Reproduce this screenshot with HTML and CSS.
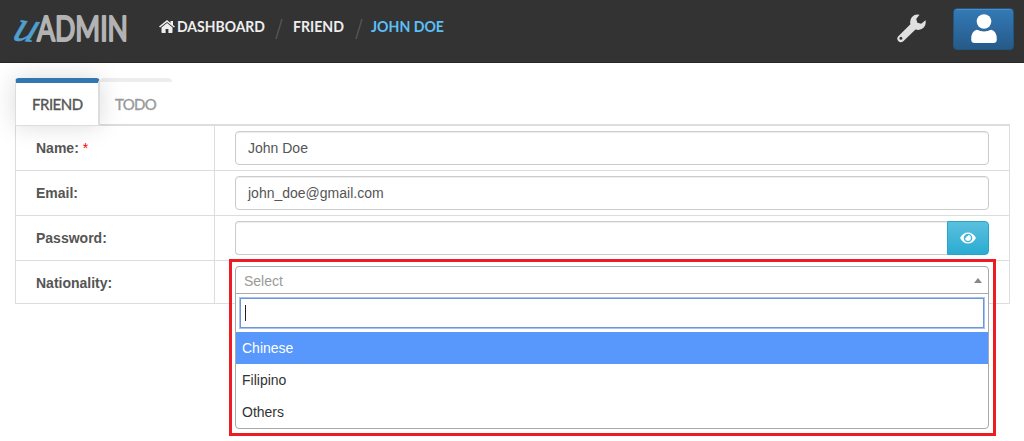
FILE: index.html
```html
<!DOCTYPE html>
<html lang="en">
<head>
<meta charset="utf-8">
<title>uAdmin - John Doe</title>
<link rel="stylesheet" href="styles.css">
</head>
<body>
<header class="navbar">
  <svg class="logo" width="118" height="34" viewBox="0 0 118 34" role="img" aria-label="uAdmin">
    <text class="logo-u" transform="translate(-1 27) rotate(5) skewX(-16)" x="0" y="0" textLength="23" lengthAdjust="spacingAndGlyphs">u</text>
    <text class="logo-admin" x="25" y="28" textLength="91" lengthAdjust="spacingAndGlyphs">ADMIN</text>
  </svg>
  <nav class="breadcrumb">
    <a class="crumb crumb-home"><svg class="home" width="16" height="13" viewBox="0 0 16 13"><path d="M8 2.9 2.500 7.400V12.200Q2.500 13 3.300 13H6.600V9H9.400V13H12.700Q13.500 13 13.500 12.200V7.400Z"/><path d="M8 0 11.500 2.900V1H14V5L16 6.600 15 7.600 8 1.900 1 7.600 0 6.600Z"/></svg><svg width="89" height="20"><text x="0" y="15" textLength="88" lengthAdjust="spacingAndGlyphs">DASHBOARD</text></svg></a>
    <svg class="slash" width="10" height="24"><path d="M2 22 8 2"/></svg>
    <a class="crumb crumb-friend"><svg width="52" height="20"><text x="0" y="15" textLength="51" lengthAdjust="spacingAndGlyphs">FRIEND</text></svg></a>
    <svg class="slash" width="10" height="24"><path d="M2 22 8 2"/></svg>
    <a class="crumb crumb-active"><svg width="74" height="20"><text x="0" y="15" textLength="73" lengthAdjust="spacingAndGlyphs">JOHN DOE</text></svg></a>
  </nav>
  <div class="tools">
    <svg class="wrench" width="30" height="30" viewBox="0 0 30 30"><path fill-rule="evenodd" d="M22.500.8Q18-.2 15 3 12.400 6.100 13.400 10.200L1.300 22.300Q-.7 24.400 1.200 26.900 3.600 29.500 6.300 27.300L18.500 15.600Q23.500 17.200 27 13.300 29.400 10 28.500 6.300L24.200 9.700 20.400 8.800 19.200 4.900ZM3.900 22.800A1.500 1.500 0 1 1 3.900 25.800 1.500 1.500 0 1 1 3.900 22.800Z"/></svg>
    <button class="user" aria-label="User"><svg width="26" height="30" viewBox="0 0 26 30"><circle cx="13" cy="7.500" r="7.300"/><path d="M6 15.800Q13 19 20 15.800 25.800 16.800 25.800 25.500 25.800 29 22.300 29H3.700Q.2 29 .2 25.500 .2 16.800 6 15.800Z"/></svg></button>
  </div>
</header>
<main class="content">
  <div class="tabs">
    <div class="tab tab-active">FRIEND</div>
    <div class="tab tab-idle">TODO</div>
  </div>
  <div class="form">
    <div class="row"><label class="label">Name: <span class="required">*</span></label><div class="field"><div class="input">John Doe</div></div></div>
    <div class="row"><label class="label">Email:</label><div class="field"><div class="input">john_doe@gmail.com</div></div></div>
    <div class="row"><label class="label">Password:</label><div class="field"><div class="input input-password"></div><button class="reveal" aria-label="Show password"><svg width="16" height="12" viewBox="0 0 16 12"><path fill-rule="evenodd" d="M0 6Q3 .5 8 .5T16 6Q13 11.500 8 11.500T0 6ZM8 1.700A4.300 4.300 0 1 0 8 10.300 4.300 4.300 0 1 0 8 1.700ZM8 3.100A2.900 2.900 0 1 1 8 8.900 2.900 2.900 0 0 1 5.100 6H6Q6 4 8 4Z"/></svg></button></div></div>
    <div class="row row-last"><label class="label">Nationality:</label><div class="field">
      <div class="picker">
        <div class="picker-head"><span>Select</span><i class="arrow"></i></div>
        <div class="picker-list">
          <div class="search"><i class="caret"></i></div>
          <div class="option option-active">Chinese</div>
          <div class="option">Filipino</div>
          <div class="option">Others</div>
        </div>
      </div>
    </div></div>
  </div>
</main>
</body>
</html>
```
FILE: styles.css
```css
* { box-sizing: border-box; }
body {
  margin: 0;
  height: 441px;
  overflow: hidden;
  background: #fff;
  color: #555;
  font: 14px/20px "Liberation Sans", Arial, sans-serif;
}
svg { display: block; flex: none; }
button { padding: 0; margin: 0; }

.navbar {
  display: flex;
  height: 63px;
  padding: 0 10px 0 12px;
  background: #333;
  border-bottom: 1px solid #282828;
}
.logo { margin-top: 13px; overflow: visible; }
.logo-u {
  font: italic 44px "Liberation Serif", serif;
  fill: #4f9fcf;
  stroke: #4f9fcf;
  stroke-width: .5px;
}
.logo-admin {
  font: 34px Lato, sans-serif;
  fill: #b3b3b3;
  stroke: #b3b3b3;
  stroke-width: 2px;
  stroke-linejoin: round;
}
.breadcrumb { display: flex; align-items: flex-start; margin-left: 29px; padding-top: 17px; }
.crumb { display: flex; fill: #eee; font: bold 15px Lato, sans-serif; }
.crumb svg { overflow: visible; }
.crumb .home { margin: 3px 2px 0 0; }
.crumb-home { width: 115px; }
.crumb-friend { width: 61px; margin-left: 9px; }
.crumb-active { margin-left: 7px; fill: #5bc0f8; }
.slash { fill: none; stroke: #555; stroke-width: 1.4px; }
.tools { display: flex; margin-left: auto; }
.wrench { margin: 14px 26px 0 0; fill: #e0e0e0; }
.user {
  display: flex;
  justify-content: center;
  width: 61px;
  height: 42px;
  margin-top: 8px;
  padding-top: 5px;
  border: 1px solid #245580;
  border-radius: 4px;
  background: linear-gradient(#337ab7, #265a88);
  box-shadow: inset 0 1px 0 rgba(255, 255, 255, .15);
  fill: #fff;
}

.content { padding: 15px 14px 0 15px; }
.tabs {
  display: flex;
  height: 48px;
  border-bottom: 2px solid #ddd;
  font: 15px/20px Lato, sans-serif;
}
.tab { border-radius: 4px 4px 0 0; }
.tab-active {
  width: 85px;
  height: 48px;
  padding: 11px 0 0 16px;
  border: 1px solid #ddd;
  border-right-width: 2px;
  border-top: 5px solid #3276b1;
  background: #fff;
  box-shadow: 0 0 25px rgba(0, 0, 0, .15);
  letter-spacing: -.5px;
  -webkit-text-stroke: .35px #555;
}
.tab-idle {
  width: 72px;
  height: 46px;
  border-top: 4px solid rgba(0, 0, 0, .07);
  padding: 12px 0 0 15px;
  color: #999;
  letter-spacing: -.7px;
  -webkit-text-stroke: .35px #999;
}
.form { border: 1px solid #ddd; border-top: 0; }
.row { display: flex; height: 45px; border-bottom: 1px solid #ddd; }
.row-last { height: 42px; border-bottom: 0; }
.label {
  width: 199px;
  padding: 12px 0 0 20px;
  border-right: 1px solid #ddd;
  font-weight: bold;
}
.required { color: #f00; font-weight: normal; }
.field { display: flex; flex: 1; padding: 5px 20px 0; }
.input {
  flex: 1;
  height: 34px;
  padding: 6px 12px;
  border: 1px solid #ccc;
  border-radius: 4px;
  box-shadow: inset 0 1px 1px rgba(0, 0, 0, .075);
}
.input-password { border-right: 0; border-radius: 4px 0 0 4px; }
.reveal {
  display: flex;
  align-items: center;
  justify-content: center;
  width: 42px;
  height: 34px;
  border: 1px solid #28a4c9;
  border-radius: 0 4px 4px 0;
  background: linear-gradient(#5bc0de, #2aabd2);
  fill: #fff;
}
.picker {
  position: relative;
  flex: 1;
  height: 163px;
  border: 1px solid #aaa;
  border-radius: 4px;
  background: #fff;
}
/* Highlight frame drawn over the surrounding form */
.picker::after {
  content: "";
  position: absolute;
  inset: -8px -8px -8px -7px;
  border: 3px solid #ed1c24;
}
.picker-head {
  display: flex;
  align-items: center;
  justify-content: space-between;
  height: 27px;
  padding: 2px 6px 0 8px;
  border-bottom: 1px solid #aaa;
  color: #999;
}
.arrow {
  margin-bottom: 1px;
  border: 4px solid transparent;
  border-top: 0;
  border-bottom: 5px solid #888;
}
.search {
  height: 30px;
  margin: 4px;
  padding: 6px 4px;
  border: 1px solid #6f95d7;
  box-shadow: 0 0 0 1px #a6c3f5;
}
.caret { display: block; width: 1px; height: 16px; background: #222; }
.option { height: 32px; padding: 6px; color: #333; }
.option-active { background: #5897fb; color: #fff; }
```
